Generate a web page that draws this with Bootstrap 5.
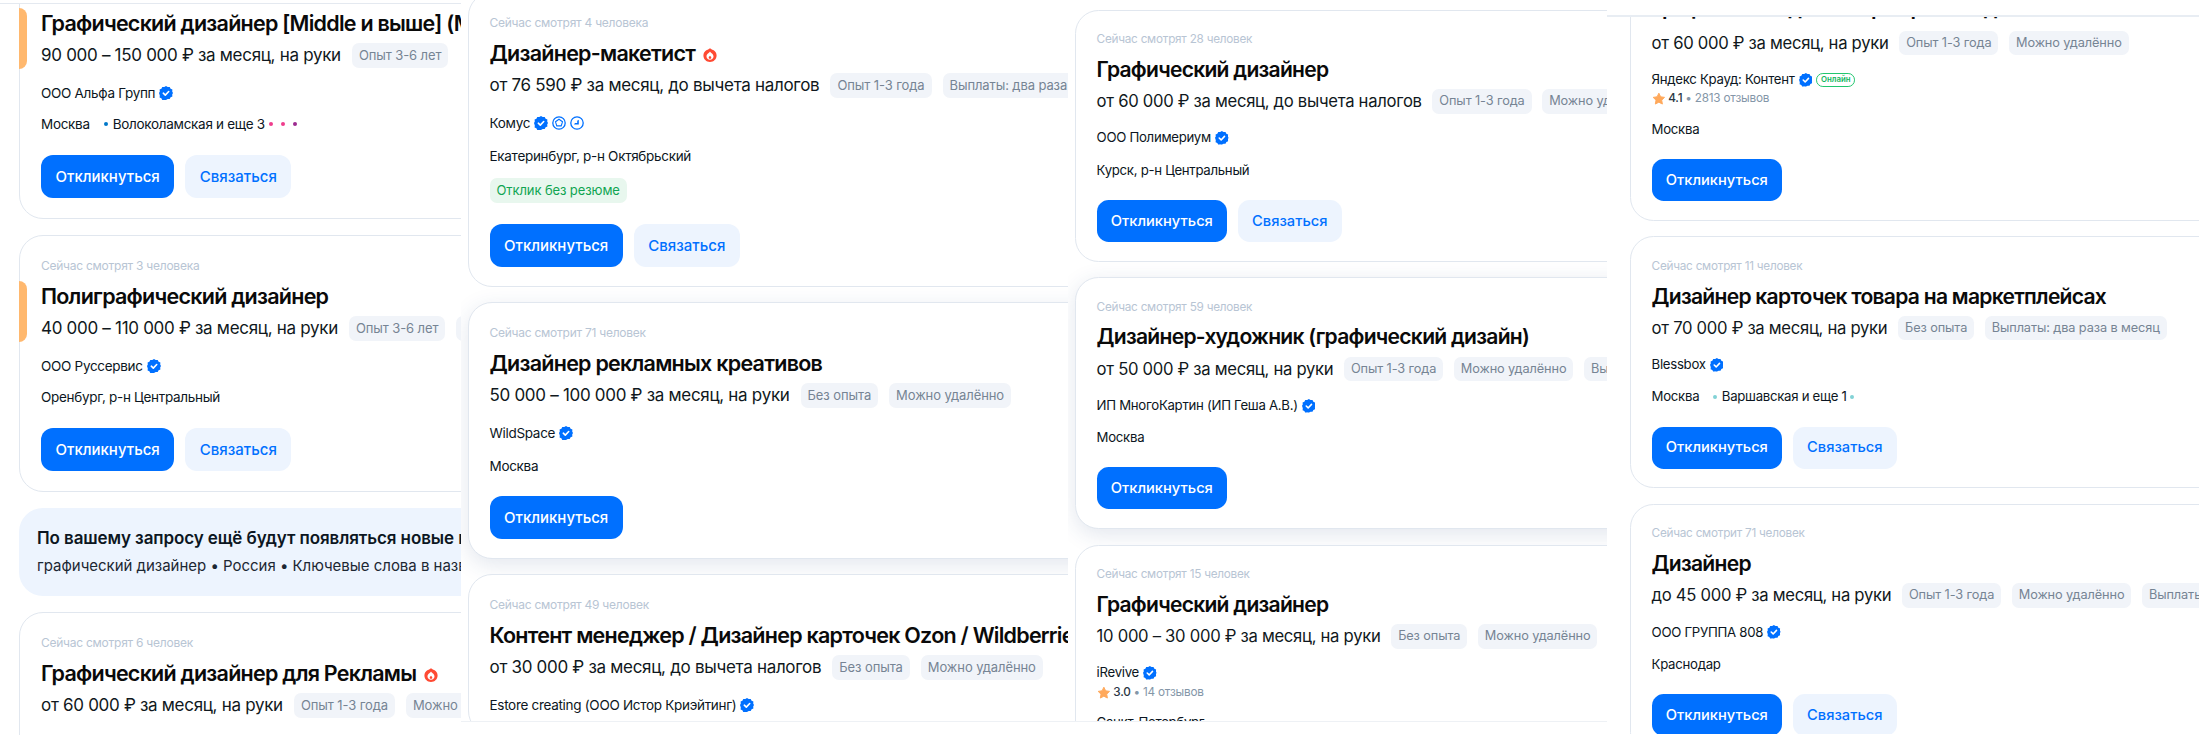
<!DOCTYPE html>
<html lang="ru">
<head>
  <meta charset="UTF-8" />
  <meta name="viewport" content="width=device-width, initial-scale=1.0"/>
  <title>Вакансии</title>
  <link href="https://cdn.jsdelivr.net/npm/bootstrap@5.3.0/dist/css/bootstrap.min.css" rel="stylesheet" />
  <style>
    body {
      font-family: Inter, "Noto Sans", sans-serif;
      background-color: #fff;
      color: #0c1622;
      overflow: hidden;
    }
    .shot-row { width: 2199px; height: 735px; }
    .shot { flex: none; overflow: hidden; white-space: nowrap; }
    .shot-a { width: 461px; height: 735px; padding: 0 0 0 19px; border-top: 1px solid #e4e9f0; margin-top: 3px; }
    .shot-b { width: 607px; height: 722px; padding-left: 7px; border-bottom: 1px solid #eef1f5; }
    .shot-c { width: 539px; height: 722px; padding-left: 7px; border-bottom: 1px solid #eef1f5; }
    .shot-d { width: 592px; height: 719px; padding-left: 23px; border-top: 2px solid #e8edf3; margin-top: 15px; }
    .stack { width: 900px; display: flex; flex-direction: column; gap: 16px; }
    .stack-a { margin-top: -42px; }
    .stack-b { margin-top: -8px; gap: 15px; }
    .stack-c { margin-top: 10px; zoom: .98; }
    .stack-d { margin-top: -67px; zoom: .98; }

    .job-card {
      flex: none;
      border: 1px solid #e1e7ef;
      border-radius: 24px;
      padding: 22px 21px 20px;
      background-color: #fff;
    }
    .stack-b .job-card { padding-left: 20.500px; }
    .stack-b .job-card, .stack-c .job-card, .stack-d .job-card { padding-bottom: 19px; }
    .job-lifted { box-shadow: 0 6px 22px rgba(40, 70, 120, .13); }
    .job-mark {
      position: absolute;
      left: -1px;
      top: 45px;
      width: 8px;
      height: 61px;
      background-color: #ffb86e;
      border-radius: 0 8px 8px 0;
    }
    .job-watch { font-size: 12px; letter-spacing: -.25px; line-height: 16px; color: #b8c5d4; }
    .job-title { font-size: 21.500px; letter-spacing: -.75px; line-height: 30px; font-weight: 600; margin: 7px 0 5px; color: #0a0a0a; }
    .job-title-up { margin: 4px 0 8px; }
    .job-pay { font-size: 17px; letter-spacing: -.3px; line-height: 25px; gap: 11px; color: #101820; }
    .job-tag {
      font-size: 13px;
      letter-spacing: -.1px;
      line-height: 25px;
      height: 25px;
      padding: 0 7px;
      border-radius: 7px;
      background-color: #f1f4f9;
      color: #768494;
    }
    .job-org { font-size: 13.500px; letter-spacing: -.3px; line-height: 20px; margin-top: 15px; gap: 4px; }
    .job-rate { font-size: 12px; letter-spacing: -.2px; line-height: 16px; margin-top: 2px; gap: 3px; color: #8496a8; }
    .job-rate b { font-weight: 500; color: #2b3744; }
    .job-place { font-size: 13.500px; letter-spacing: -.3px; line-height: 20px; margin-top: 11px; gap: 4px; }
    .job-free { margin-top: 12px; background-color: #e8f7ee; color: #10a552; }
    .job-actions { margin-top: 21px; gap: 11px; }
    /* these three shots sit about 2px lower on the location line */
    .stack-b .job-place, .stack-c .job-place, .stack-d .job-place { margin-top: 13px; }
    .stack-b .job-place + .job-actions, .stack-c .job-place + .job-actions, .stack-d .job-place + .job-actions { margin-top: 20px; }
    .btn-reply, .btn-contact {
      --bs-btn-font-size: 15px;
      --bs-btn-font-weight: 500;
      --bs-btn-line-height: 21px;
      --bs-btn-padding-y: 11px;
      --bs-btn-border-width: 0;
      --bs-btn-border-radius: 12px;
    }
    .btn-reply {
      --bs-btn-padding-x: 14.500px;
      --bs-btn-bg: #0070ff;
      --bs-btn-color: #fff;
    }
    .btn-contact {
      --bs-btn-padding-x: 14.500px;
      --bs-btn-bg: #edf4fe;
      --bs-btn-color: #0070ff;
    }
    .metro { display: inline-block; width: 4px; height: 4px; border-radius: 50%; }
    .metro-first { margin-left: 10px; margin-right: 1px; }
    .online {
      font-size: 8px;
      font-weight: 600;
      letter-spacing: 0;
      line-height: 12px;
      padding: 0 4px;
      border: 1px solid #22c66e;
      border-radius: 7px;
      color: #12b660;
    }
    .notice {
      flex: none;
      height: 88px;
      padding: 16px 18px;
      border-radius: 24px;
      background-color: #edf4fe;
    }
    .notice-head { font-size: 17px; letter-spacing: -.1px; font-weight: 600; line-height: 28px; }
    .notice-text { font-size: 15px; letter-spacing: -.02px; line-height: 28px; color: #1c2733; }
    .ico { flex: none; }
  </style>
</head>
<body>

  <!-- shared icons -->
  <svg width="0" height="0" class="position-absolute">
    <symbol id="verified" viewBox="0 0 14 14">
      <path fill="#0070ff" d="M7 0l1.700 1.100 2-.2.900 1.800 1.800.9-.2 2L14 7l-.8 1.400.2 2-1.800.9-.9 1.800-2-.2L7 14l-1.700-.1-2 .2-.9-1.800-1.800-.9.2-2L0 7l.8-1.400-.2-2 1.800-.9.900-1.800 2 .2z"/>
      <path fill="none" stroke="#fff" stroke-width="1.600" stroke-linecap="round" stroke-linejoin="round" d="M4.300 7.200l2 1.900 3.400-3.600"/>
    </symbol>
    <symbol id="fire" viewBox="0 0 14 14">
      <path fill="#ff4a33" d="M7 .2c1 .9 1.900 1.200 3.200 1.900C12.300 3.200 13.600 5.200 13.600 7.500 13.600 11.100 10.700 14 7 14S.4 11.100.4 7.500C.4 5.200 1.700 3.200 3.800 2.100 5.100 1.400 6 1.100 7 .2z"/>
      <path fill="#fff" d="M7 3.600c.6 1.100 3.500 2.400 3.500 5 0 1.900-1.600 3.200-3.500 3.200S3.500 10.500 3.500 8.600c0-2.600 2.900-3.900 3.500-5z"/>
      <path fill="#ff4a33" d="M7 7.800c.4.600 1.300 1 1.300 1.900 0 .7-.6 1.200-1.300 1.200s-1.300-.5-1.300-1.200c0-.9.900-1.300 1.300-1.900z"/>
    </symbol>
    <symbol id="star" viewBox="0 0 14 14">
      <path fill="#ffa95c" stroke="#ffa95c" stroke-width="1" stroke-linejoin="round" d="M7 1.200l1.800 3.700 4 .6-2.900 2.800.7 4L7 10.400l-3.600 1.900.7-4L1.200 5.500l4-.6z"/>
    </symbol>
  </svg>

  <div class="shot-row d-flex align-items-start">

    <!-- column 1 -->
    <div class="shot shot-a">
      <div class="stack stack-a">
        <div class="card job-card">
          <span class="job-mark"></span>
          <div class="job-watch">Сейчас смотрят 5 человек</div>
          <div class="job-title">Графический дизайнер [Middle и выше] (Москва)</div>
          <div class="job-pay d-flex align-items-center">90 000 – 150 000 ₽ за месяц, на руки <span class="job-tag">Опыт 3-6 лет</span></div>
          <div class="job-org d-flex align-items-center">ООО Альфа Групп <svg class="ico" width="14" height="14"><use href="#verified"/></svg></div>
          <div class="job-place d-flex align-items-center">
            <span>Москва</span>
            <span class="metro metro-first" style="background:#0078c9"></span>
            <span>Волоколамская и еще 3</span>
            <span class="metro" style="background:#ef3d8d"></span>
            <span class="metro ms-1" style="background:#ef3d8d"></span>
            <span class="metro ms-1" style="background:#9c2b8f"></span>
          </div>
          <div class="job-actions d-flex">
            <button class="btn btn-reply">Откликнуться</button>
            <button class="btn btn-contact">Связаться</button>
          </div>
        </div>

        <div class="card job-card">
          <span class="job-mark"></span>
          <div class="job-watch">Сейчас смотрят 3 человека</div>
          <div class="job-title">Полиграфический дизайнер</div>
          <div class="job-pay d-flex align-items-center">40 000 – 110 000 ₽ за месяц, на руки <span class="job-tag">Опыт 3-6 лет</span> <span class="job-tag">Можно удалённо</span></div>
          <div class="job-org d-flex align-items-center">ООО Руссервис <svg class="ico" width="14" height="14"><use href="#verified"/></svg></div>
          <div class="job-place">Оренбург, р-н Центральный</div>
          <div class="job-actions d-flex">
            <button class="btn btn-reply">Откликнуться</button>
            <button class="btn btn-contact">Связаться</button>
          </div>
        </div>

        <div class="notice">
          <div class="notice-head">По вашему запросу ещё будут появляться новые вакансии</div>
          <div class="notice-text">графический дизайнер • Россия • Ключевые слова в названии вакансии</div>
        </div>

        <div class="card job-card">
          <div class="job-watch">Сейчас смотрят 6 человек</div>
          <div class="job-title d-flex align-items-center gap-2">Графический дизайнер для Рекламы <svg class="ico mt-1" width="14" height="14"><use href="#fire"/></svg></div>
          <div class="job-pay d-flex align-items-center">от 60 000 ₽ за месяц, на руки <span class="job-tag">Опыт 1-3 года</span> <span class="job-tag">Можно удалённо</span></div>
          <div class="job-org d-flex align-items-center">Яндекс Крауд: Контент <svg class="ico" width="14" height="14"><use href="#verified"/></svg> <span class="online">Онлайн</span></div>
        </div>
      </div>
    </div>

    <!-- column 2 -->
    <div class="shot shot-b">
      <div class="stack stack-b">
        <div class="card job-card">
          <div class="job-watch">Сейчас смотрят 4 человека</div>
          <div class="job-title d-flex align-items-center gap-2">Дизайнер-макетист <svg class="ico mt-1" width="14" height="14"><use href="#fire"/></svg></div>
          <div class="job-pay d-flex align-items-center">от 76 590 ₽ за месяц, до вычета налогов <span class="job-tag">Опыт 1-3 года</span> <span class="job-tag">Выплаты: два раза в месяц</span></div>
          <div class="job-org d-flex align-items-center">Комус
            <svg class="ico" width="14" height="14"><use href="#verified"/></svg>
            <svg class="ico" width="14" height="14" viewBox="0 0 14 14"><circle cx="7" cy="7" r="6.200" fill="none" stroke="#0070ff" stroke-width="1.300"/><path fill="none" stroke="#0070ff" stroke-width="1.100" d="M7 3.300l3.500 2.500-1.300 4.100H4.800L3.500 5.800z"/></svg>
            <svg class="ico" width="14" height="14" viewBox="0 0 14 14"><circle cx="7" cy="7" r="6.200" fill="none" stroke="#0070ff" stroke-width="1.300"/><path fill="#0070ff" d="M8.800 3.800v4.800H4l1-1.600h2.200V4.800z"/></svg>
          </div>
          <div class="job-place">Екатеринбург, р-н Октябрьский</div>
          <span class="job-tag job-free align-self-start">Отклик без резюме</span>
          <div class="job-actions d-flex">
            <button class="btn btn-reply">Откликнуться</button>
            <button class="btn btn-contact">Связаться</button>
          </div>
        </div>

        <div class="card job-card job-lifted">
          <div class="job-watch">Сейчас смотрит 71 человек</div>
          <div class="job-title">Дизайнер рекламных креативов</div>
          <div class="job-pay d-flex align-items-center">50 000 – 100 000 ₽ за месяц, на руки <span class="job-tag">Без опыта</span> <span class="job-tag">Можно удалённо</span></div>
          <div class="job-org d-flex align-items-center">WildSpace <svg class="ico" width="14" height="14"><use href="#verified"/></svg></div>
          <div class="job-place">Москва</div>
          <div class="job-actions d-flex">
            <button class="btn btn-reply">Откликнуться</button>
          </div>
        </div>

        <div class="card job-card">
          <div class="job-watch">Сейчас смотрят 49 человек</div>
          <div class="job-title">Контент менеджер / Дизайнер карточек Ozon / Wildberries</div>
          <div class="job-pay d-flex align-items-center">от 30 000 ₽ за месяц, до вычета налогов <span class="job-tag">Без опыта</span> <span class="job-tag">Можно удалённо</span></div>
          <div class="job-org d-flex align-items-center">Estore creating (ООО Истор Криэйтинг) <svg class="ico" width="14" height="14"><use href="#verified"/></svg></div>
        </div>
      </div>
    </div>

    <!-- column 3 -->
    <div class="shot shot-c">
      <div class="stack stack-c">
        <div class="card job-card">
          <div class="job-watch">Сейчас смотрят 28 человек</div>
          <div class="job-title">Графический дизайнер</div>
          <div class="job-pay d-flex align-items-center">от 60 000 ₽ за месяц, до вычета налогов <span class="job-tag">Опыт 1-3 года</span> <span class="job-tag">Можно удалённо</span></div>
          <div class="job-org d-flex align-items-center">ООО Полимериум <svg class="ico" width="14" height="14"><use href="#verified"/></svg></div>
          <div class="job-place">Курск, р-н Центральный</div>
          <div class="job-actions d-flex">
            <button class="btn btn-reply">Откликнуться</button>
            <button class="btn btn-contact">Связаться</button>
          </div>
        </div>

        <div class="card job-card job-lifted">
          <div class="job-watch">Сейчас смотрят 59 человек</div>
          <div class="job-title">Дизайнер-художник (графический дизайн)</div>
          <div class="job-pay d-flex align-items-center">от 50 000 ₽ за месяц, на руки <span class="job-tag">Опыт 1-3 года</span> <span class="job-tag">Можно удалённо</span> <span class="job-tag">Выплаты: два раза в месяц</span></div>
          <div class="job-org d-flex align-items-center">ИП МногоКартин (ИП Геша А.В.) <svg class="ico" width="14" height="14"><use href="#verified"/></svg></div>
          <div class="job-place">Москва</div>
          <div class="job-actions d-flex">
            <button class="btn btn-reply">Откликнуться</button>
          </div>
        </div>

        <div class="card job-card">
          <div class="job-watch">Сейчас смотрят 15 человек</div>
          <div class="job-title">Графический дизайнер</div>
          <div class="job-pay d-flex align-items-center">10 000 – 30 000 ₽ за месяц, на руки <span class="job-tag">Без опыта</span> <span class="job-tag">Можно удалённо</span></div>
          <div class="job-org d-flex align-items-center">iRevive <svg class="ico" width="14" height="14"><use href="#verified"/></svg></div>
          <div class="job-rate d-flex align-items-center"><svg class="ico" width="14" height="14"><use href="#star"/></svg> <b>3.0</b> <span>•</span> 14 отзывов</div>
          <div class="job-place">Санкт-Петербург</div>
        </div>
      </div>
    </div>

    <!-- column 4 -->
    <div class="shot shot-d">
      <div class="stack stack-d">
        <div class="card job-card">
          <div class="job-watch">Сейчас смотрят 8 человек</div>
          <div class="job-title job-title-up">Графический дизайнер карточек для Ozon</div>
          <div class="job-pay d-flex align-items-center">от 60 000 ₽ за месяц, на руки <span class="job-tag">Опыт 1-3 года</span> <span class="job-tag">Можно удалённо</span></div>
          <div class="job-org d-flex align-items-center">Яндекс Крауд: Контент <svg class="ico" width="14" height="14"><use href="#verified"/></svg> <span class="online">Онлайн</span></div>
          <div class="job-rate d-flex align-items-center"><svg class="ico" width="14" height="14"><use href="#star"/></svg> <b>4.1</b> <span>•</span> 2813 отзывов</div>
          <div class="job-place">Москва</div>
          <div class="job-actions d-flex">
            <button class="btn btn-reply">Откликнуться</button>
          </div>
        </div>

        <div class="card job-card">
          <div class="job-watch">Сейчас смотрят 11 человек</div>
          <div class="job-title">Дизайнер карточек товара на маркетплейсах</div>
          <div class="job-pay d-flex align-items-center">от 70 000 ₽ за месяц, на руки <span class="job-tag">Без опыта</span> <span class="job-tag">Выплаты: два раза в месяц</span></div>
          <div class="job-org d-flex align-items-center">Blessbox <svg class="ico" width="14" height="14"><use href="#verified"/></svg></div>
          <div class="job-place d-flex align-items-center">
            <span>Москва</span>
            <span class="metro metro-first" style="background:#82d2d6"></span>
            <span>Варшавская и еще 1</span>
            <span class="metro" style="background:#82d2d6"></span>
          </div>
          <div class="job-actions d-flex">
            <button class="btn btn-reply">Откликнуться</button>
            <button class="btn btn-contact">Связаться</button>
          </div>
        </div>

        <div class="card job-card">
          <div class="job-watch">Сейчас смотрит 71 человек</div>
          <div class="job-title">Дизайнер</div>
          <div class="job-pay d-flex align-items-center">до 45 000 ₽ за месяц, на руки <span class="job-tag">Опыт 1-3 года</span> <span class="job-tag">Можно удалённо</span> <span class="job-tag">Выплаты: два раза в месяц</span></div>
          <div class="job-org d-flex align-items-center">ООО ГРУППА 808 <svg class="ico" width="14" height="14"><use href="#verified"/></svg></div>
          <div class="job-place">Краснодар</div>
          <div class="job-actions d-flex">
            <button class="btn btn-reply">Откликнуться</button>
            <button class="btn btn-contact">Связаться</button>
          </div>
        </div>
      </div>
    </div>

  </div>

  <script src="https://cdn.jsdelivr.net/npm/bootstrap@5.3.0/dist/js/bootstrap.bundle.min.js"></script>
</body>
</html>
